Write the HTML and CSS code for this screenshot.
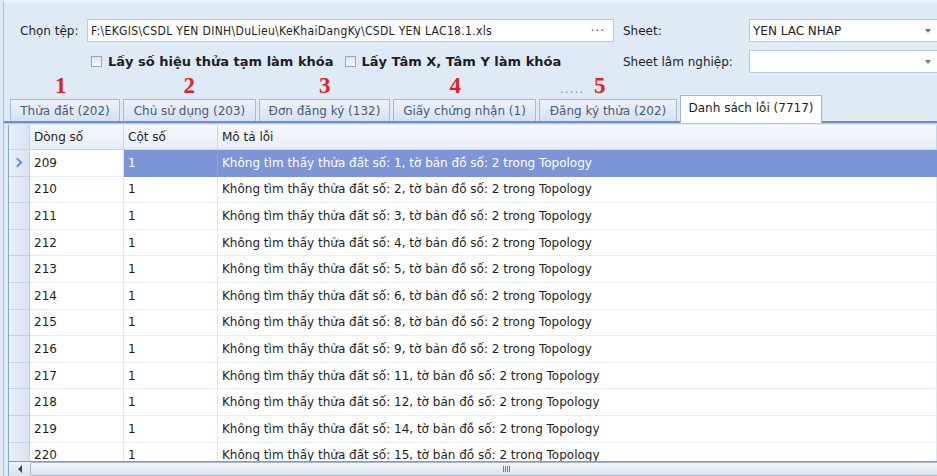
FILE: index.html
```html
<!DOCTYPE html>
<html lang="vi">
<head>
  <meta charset="UTF-8">
  <title>Nhập dữ liệu kê khai</title>
  <link rel="stylesheet" href="styles.css">
</head>
<body>
  <div class="window">
    <div class="form">
      <div class="form-row">
        <label class="label-file">Chọn tệp:</label>
        <div class="text-box file-box">
          <span class="path">F:\EKGIS\CSDL YEN DINH\DuLieu\KeKhaiDangKy\CSDL YEN LAC18.1.xls</span>
          <span class="dots">···</span>
        </div>
        <label class="label-sheet">Sheet:</label>
        <div class="text-box combo">
          <span>YEN LAC NHAP</span>
          <span class="arrow"></span>
        </div>
      </div>
      <div class="form-row">
        <div class="checks">
          <label class="check"><span class="box"></span>Lấy số hiệu thửa tạm làm khóa</label>
          <label class="check"><span class="box"></span>Lấy Tâm X, Tâm Y làm khóa</label>
        </div>
        <label class="label-sheet">Sheet lâm nghiệp:</label>
        <div class="text-box combo">
          <span></span>
          <span class="arrow"></span>
        </div>
      </div>
    </div>

    <div class="marks">
      <span class="mark m1">1</span>
      <span class="mark m2">2</span>
      <span class="mark m3">3</span>
      <span class="mark m4">4</span>
      <span class="mark m5"><i>.....</i>5</span>
    </div>

    <div class="tabs">
      <div class="tab t1">Thửa đất (202)</div>
      <div class="tab t2">Chủ sử dụng (203)</div>
      <div class="tab t3">Đơn đăng ký (132)</div>
      <div class="tab t4">Giấy chứng nhận (1)</div>
      <div class="tab t5">Đăng ký thửa (202)</div>
      <div class="tab active">Danh sách lỗi (7717)</div>
    </div>

    <div class="grid">
      <div class="row head">
        <div class="ind"></div>
        <div class="cell c1">Dòng số</div>
        <div class="cell c2">Cột số</div>
        <div class="cell c3">Mô tả lỗi</div>
      </div>
      <div id="rows"></div>
      <div class="hscroll">
        <div class="sbtn"><span class="larrow"></span></div>
        <div class="thumb"><span class="grip"></span></div>
      </div>
    </div>
  </div>

  <script>
    const rows = [
      [209, 1, 2], [210, 2, 2], [211, 3, 2], [212, 4, 2], [213, 5, 2], [214, 6, 2],
      [215, 8, 2], [216, 9, 2], [217, 11, 2], [218, 12, 2], [219, 14, 2], [220, 15, 2]
    ];
    const holder = document.getElementById('rows');
    rows.forEach((r, i) => {
      const row = document.createElement('div');
      row.className = 'row' + (i === 0 ? ' selected' : '');
      row.innerHTML =
        '<div class="ind">' + (i === 0 ? '<span class="chev"></span>' : '') + '</div>' +
        '<div class="cell c1">' + r[0] + '</div>' +
        '<div class="cell c2">1</div>' +
        '<div class="cell c3">Không tìm thấy thửa đất số: ' + r[1] + ', tờ bản đồ số: ' + r[2] + ' trong Topology</div>';
      holder.appendChild(row);
    });
  </script>
</body>
</html>
```

FILE: styles.css
```css
body {
  margin: 0;
  background: #dfeaf7;
  font-family: "DejaVu Sans", "Liberation Sans", sans-serif;
  font-size: 12px;
  color: #1e1e1e;
  overflow: hidden;
}

.window {
  height: 476px;
  margin-left: 3px;
  border-left: 1px solid #a9bdd9;
  border-top: 3px solid #eaf1fa;
  display: flex;
  flex-direction: column;
  box-sizing: border-box;
}

.form {
  padding-top: 16px;
}

.form-row {
  display: flex;
  align-items: center;
  height: 23px;
  margin-bottom: 8px;
}

.form-row > * {
  flex: none;
}

.label-file {
  width: 67px;
  padding-left: 16px;
}

.text-box {
  height: 23px;
  background: #fff;
  border: 1px solid #b9c9df;
  box-sizing: border-box;
  display: flex;
  align-items: center;
  justify-content: space-between;
  padding: 0 4px 0 3px;
  white-space: nowrap;
}

.file-box {
  width: 527px;
}

.path {
  font-family: "DejaVu Sans Condensed", "DejaVu Sans", sans-serif;
  letter-spacing: 0.33px;
}

.dots {
  color: #555;
  letter-spacing: 1px;
  padding-right: 4px;
}

.label-sheet {
  width: 126px;
  padding-left: 9px;
}

.combo {
  width: 189px;
  position: relative;
}

.arrow {
  position: absolute;
  right: 6px;
  top: 9px;
  border-left: 3px solid transparent;
  border-right: 3px solid transparent;
  border-top: 4px solid #777;
}

.checks {
  width: 610px;
  padding-left: 87px;
  box-sizing: border-box;
  display: flex;
  gap: 11px;
}

.check {
  display: flex;
  align-items: center;
  font-weight: bold;
  font-size: 13px;
  gap: 6px;
  white-space: nowrap;
}

.box {
  width: 11px;
  height: 11px;
  border: 1px solid #9aa7b8;
  background: linear-gradient(#dfe3e8, #fafbfc);
  box-sizing: border-box;
}

.marks {
  display: flex;
  height: 21px;
  color: #e3201c;
  font-family: "Liberation Serif", serif;
  font-weight: bold;
  font-size: 23px;
  line-height: 22px;
  margin-top: -6px;
}

.mark i {
  font-family: "DejaVu Sans", sans-serif;
  font-weight: normal;
  font-style: normal;
  font-size: 12px;
  color: #7f8ea8;
  letter-spacing: 1px;
  margin-right: 10px;
}

.m1 { margin-left: 51px; }
.m2 { margin-left: 117px; }
.m3 { margin-left: 124px; }
.m4 { margin-left: 119px; }
.m5 { margin-left: 99px; }

.tabs {
  display: flex;
  align-items: flex-end;
  padding-left: 6px;
  gap: 3px;
  height: 25px;
  border-bottom: 2px solid #6f90c6;
  box-shadow: 0 1px 0 #b7c9e2;
}

.tab {
  height: 22px;
  box-sizing: border-box;
  border: 1px solid #a8bbd6;
  border-bottom: none;
  background: linear-gradient(#eef3fa, #d4e1f2);
  color: #4a5a78;
  display: flex;
  align-items: center;
  justify-content: center;
  white-space: nowrap;
}

.t1 { width: 110px; }
.t2 { width: 133px; }
.t3 { width: 131px; }
.t4 { width: 143px; }
.t5 { width: 138px; }

.tab.active {
  width: 142px;
  height: 28px;
  background: #fff;
  color: #1e1e1e;
  border-color: #a3b6d2;
  margin-bottom: -2px;
  padding-bottom: 4px;
}

.grid {
  flex: 1;
  margin: 2px 0 0 4px;
  border-left: 1px solid #8fa7cb;
  background: #fff;
  display: flex;
  flex-direction: column;
  overflow: hidden;
}

.row {
  display: flex;
  height: 26.6px;
  flex: none;
}

.row.head {
  height: 25px;
  background: linear-gradient(#f6f9fd, #e6eef8);
  border-bottom: 1px solid #c8d6ea;
  box-sizing: border-box;
}

.ind {
  width: 21px;
  flex: none;
  background: linear-gradient(90deg, #e9f0f9, #d7e3f3);
  border-right: 1px solid #c1d0e5;
  border-bottom: 1px solid #c1d0e5;
  box-sizing: border-box;
  display: flex;
  align-items: center;
  justify-content: center;
}

.head .ind {
  border-bottom: none;
}

.cell {
  display: flex;
  align-items: center;
  padding-left: 4px;
  box-sizing: border-box;
  border-right: 1px solid #e2e7ee;
  border-bottom: 1px solid #e8edf4;
  white-space: nowrap;
}

.head .cell {
  border-right: 1px solid #c8d6ea;
  border-bottom: none;
}

.c1 { width: 94px; }
.c2 { width: 94px; }
.c3 { flex: 1; }

.selected .c2,
.selected .c3 {
  background: #7c95d7;
  color: #fff;
  border-color: #7c95d7;
}

.selected .c2 {
  border-right-color: #8ea3dc;
}

.chev {
  width: 5px;
  height: 5px;
  border-right: 2px solid #6d95c9;
  border-top: 2px solid #6d95c9;
  transform: rotate(45deg);
  margin-left: -3px;
}

#rows {
  flex: 1;
  overflow: hidden;
}

.hscroll {
  height: 14px;
  flex: none;
  display: flex;
  border-top: 1px solid #8b9bb5;
  background: linear-gradient(#eef2f8, #d9e2ee);
}

.sbtn {
  width: 21px;
  flex: none;
  display: flex;
  align-items: center;
  justify-content: center;
}

.larrow {
  border-top: 4px solid transparent;
  border-bottom: 4px solid transparent;
  border-right: 4px solid #444;
}

.thumb {
  width: 950px;
  flex: none;
  border: 1px solid #a7b4c8;
  border-radius: 2px;
  background: linear-gradient(#f4f7fb, #dce4ef);
  display: flex;
  align-items: center;
  justify-content: center;
}

.grip {
  width: 7px;
  height: 6px;
  background: repeating-linear-gradient(90deg, #6e7d93 0 1px, transparent 1px 2px);
}
```
